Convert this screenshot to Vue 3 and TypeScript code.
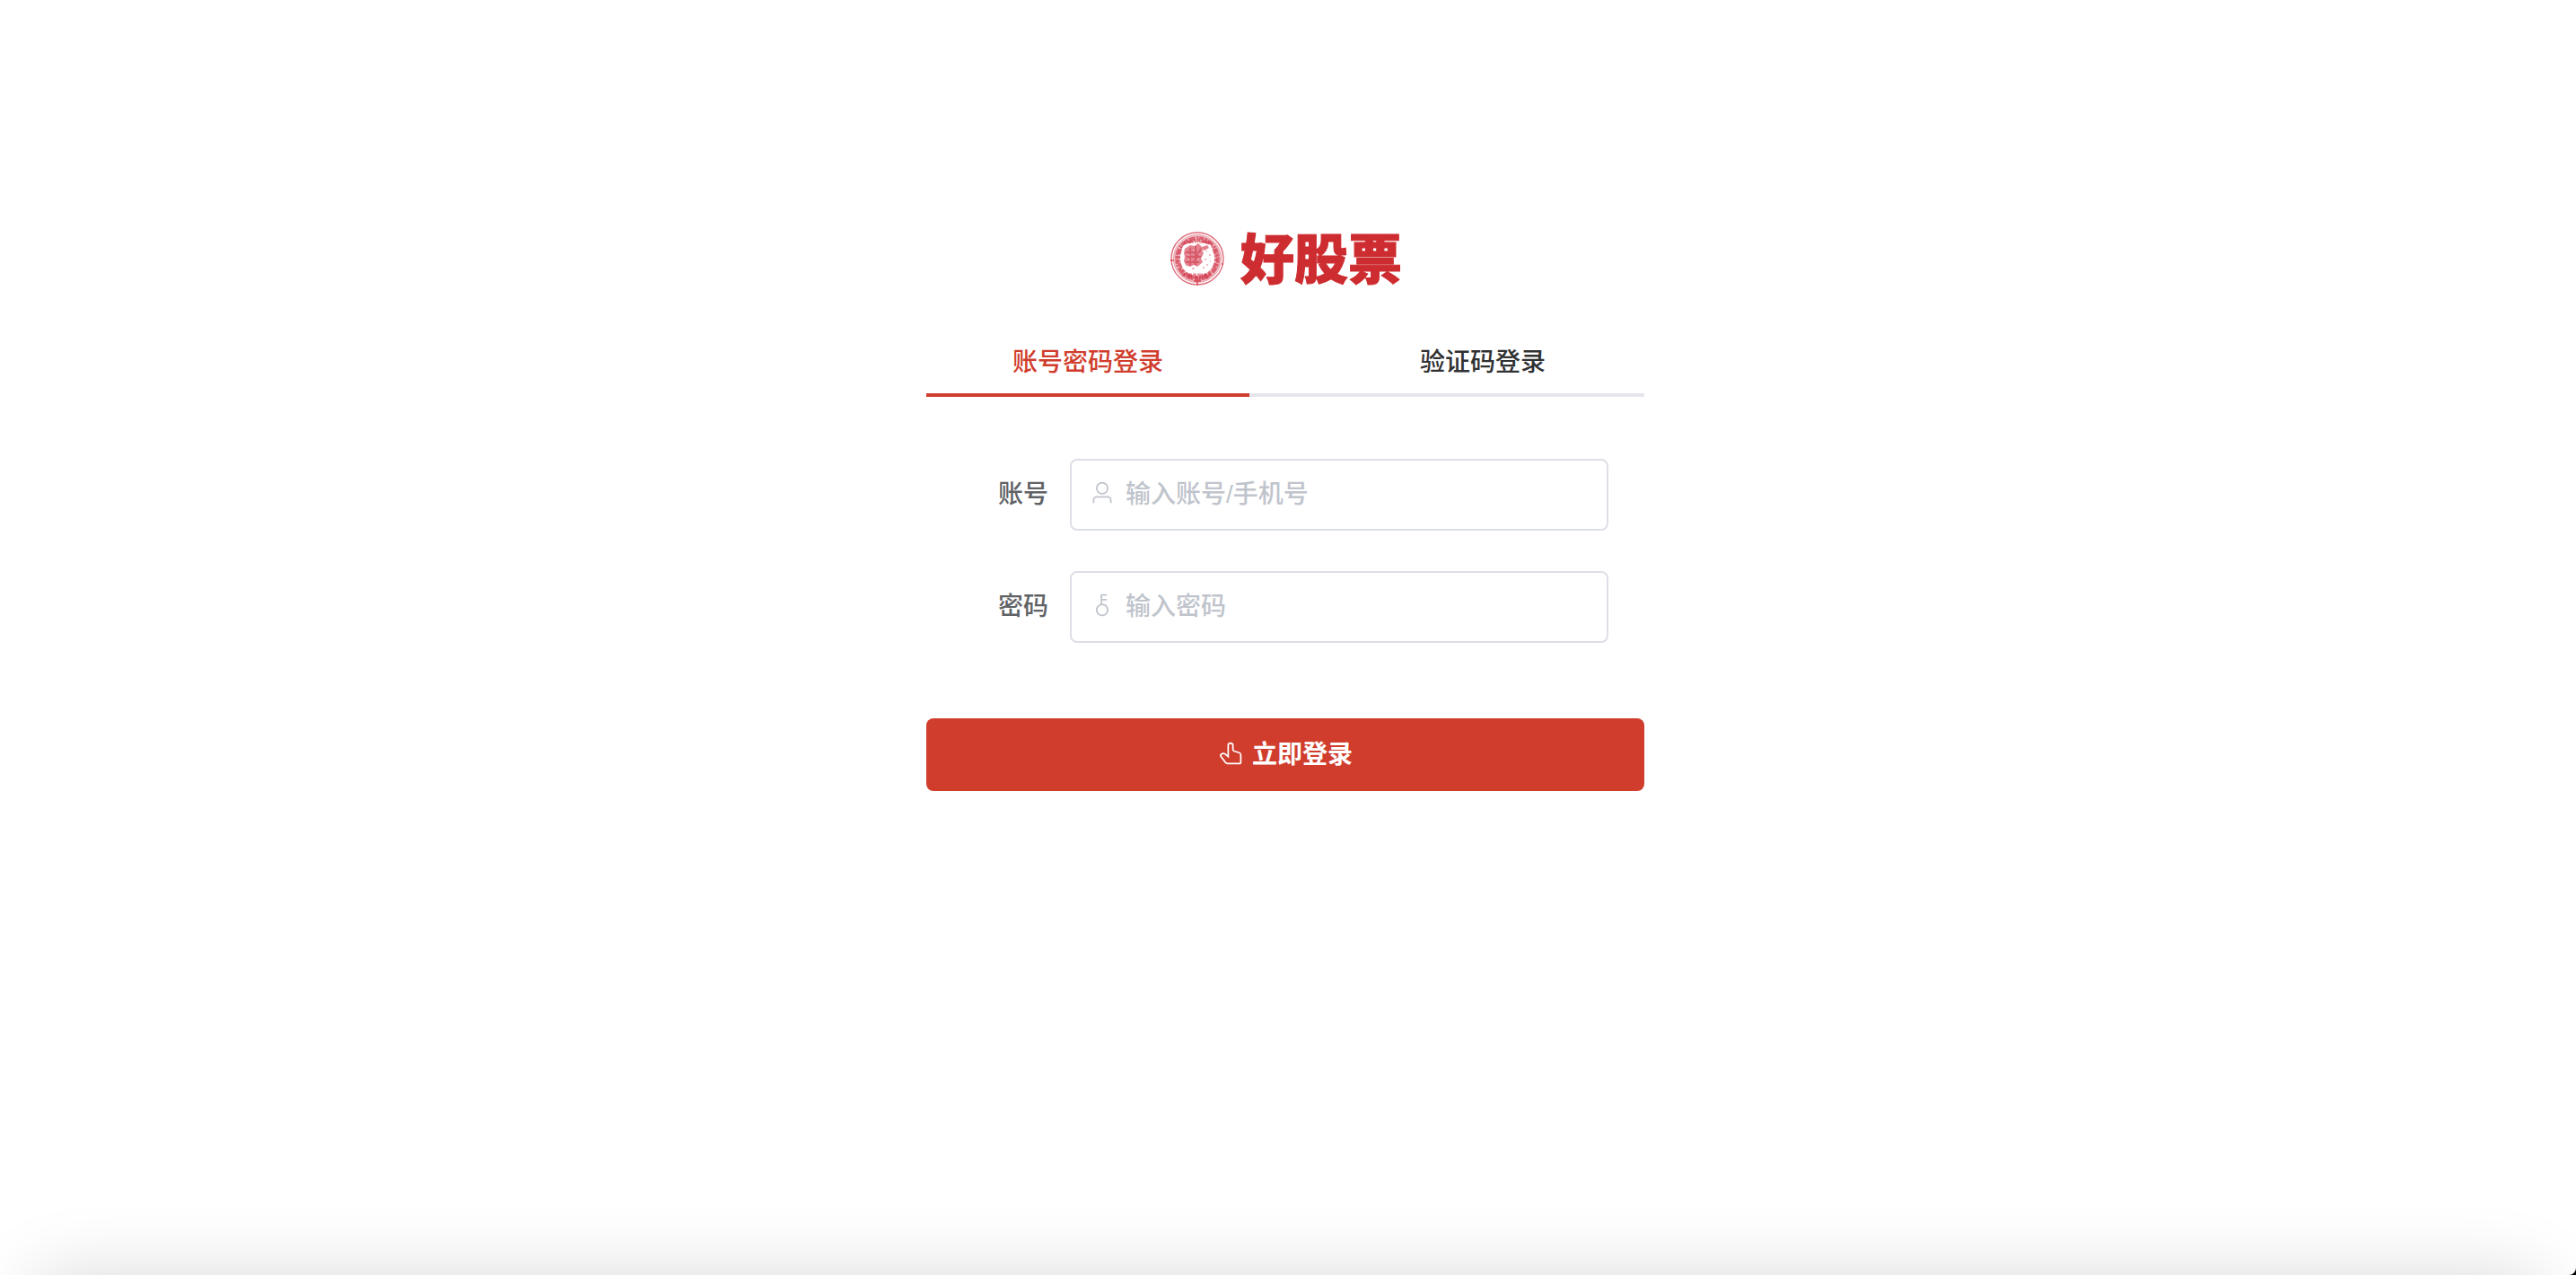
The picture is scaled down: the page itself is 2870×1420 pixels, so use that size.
<script setup lang="ts">
import { ref } from 'vue'

type TabName = 'password' | 'code'

interface TabItem {
  name: TabName
  label: string
}

const tabs: TabItem[] = [
  { name: 'password', label: '账号密码登录' },
  { name: 'code', label: '验证码登录' },
]

const active = ref<TabName>('password')
const account = ref('')
const password = ref('')
</script>

<template>
  <div class="page">
    <main class="login">
      <h1 class="brand">
        <svg class="seal" viewBox="0 0 60 60" fill="none" stroke="#cf3044" aria-hidden="true">
          <circle cx="30" cy="30" r="29" stroke-width="1.4" opacity=".7" />
          <circle cx="30" cy="30" r="26.5" stroke-width="1" opacity=".5" />
          <circle cx="30" cy="30" r="22.5" stroke-width="6.5" opacity=".4" />
          <circle cx="30" cy="30" r="23" stroke-width="3.5" stroke-dasharray="5 1 3 1 7 2 2 1" opacity=".6" />
          <circle cx="30" cy="30" r="20.5" stroke-width="3" stroke-dasharray="3 2 6 1 2 2" opacity=".55" />
          <path d="M15 12h30M13 48h32M20 51h22" stroke-width="3" stroke-dasharray="4 1 6 1" opacity=".5" />
          <path
            d="M17 14 Q31 10 45 15 Q49 24 47 38 Q44 47 32 45 Q18 47 14 41 Q10 28 13 19 Q14 15 17 14Z"
            fill="#fff"
            stroke="none"
          />
          <path
            d="M16 19l6-4 5 1 4-3 4 4 6-2 2 3-5 3-3-1 2 4-3 6 2 4-6 5-4-2-4 2-5-2-2-4 1-5-1-4z"
            fill="#cf3044"
            stroke="none"
            opacity=".6"
          />
          <path d="M17 23h13M18 28h16M17 34h15M22 18v20M28 16v21M34 19l-8 16" stroke-width="2" opacity=".5" />
          <path d="M20 26h2M25 21h2M31 25h2M20 31h2M30 31h2" stroke="#fff" stroke-width="1" opacity=".5" />
          <path d="M40 22h1M43 26h2M38 31h2M44 33h1M40 37h2M36 40h2M24 41h3M18 38h1" stroke-width="1.5" opacity=".45" />
          <path d="M0 32h4M30 55v5M26 55h8M57 36h2" stroke-width="1.5" opacity=".8" />
        </svg>
        <span class="brand-name">好股票</span>
      </h1>

      <div class="tabs" role="tablist">
        <button
          v-for="tab in tabs"
          :key="tab.name"
          type="button"
          role="tab"
          class="tab"
          :class="{ active: active === tab.name }"
          :aria-selected="active === tab.name"
          @click="active = tab.name"
        >
          {{ tab.label }}
        </button>
      </div>

      <form @submit.prevent>
        <div class="fields">
          <div class="field">
            <label for="account">账号</label>
            <div class="control">
              <svg class="icon" viewBox="0 0 1024 1024" fill="currentColor" aria-hidden="true">
                <path
                  d="M512 512a192 192 0 1 0 0-384 192 192 0 0 0 0 384m0 64a256 256 0 1 1 0-512 256 256 0 0 1 0 512m320 320v-96a96 96 0 0 0-96-96H288a96 96 0 0 0-96 96v96a32 32 0 1 1-64 0v-96a160 160 0 0 1 160-160h448a160 160 0 0 1 160 160v96a32 32 0 1 1-64 0"
                />
              </svg>
              <input id="account" v-model="account" type="text" placeholder="输入账号/手机号" autocomplete="off" />
            </div>
          </div>
          <div class="field">
            <label for="password">密码</label>
            <div class="control">
              <svg class="icon" viewBox="0 0 1024 1024" fill="currentColor" aria-hidden="true">
                <path
                  d="M448 456.064V96a32 32 0 0 1 32-32.064L672 64a32 32 0 0 1 0 64H512v128h160a32 32 0 0 1 0 64H512v128a256 256 0 1 1-64 8.064M512 896a192 192 0 1 0 0-384 192 192 0 0 0 0 384"
                />
              </svg>
              <input id="password" v-model="password" type="password" placeholder="输入密码" autocomplete="off" />
            </div>
          </div>
        </div>

        <button class="submit" type="submit">
          <svg class="icon" viewBox="0 0 1024 1024" fill="currentColor" aria-hidden="true">
            <path
              d="M511.552 128c-35.584 0-64.384 28.8-64.384 64.448v516.48L274.048 570.88a94.272 94.272 0 0 0-112.896-3.456 44.416 44.416 0 0 0-8.96 62.208L332.8 870.4A64 64 0 0 0 384 896h512V575.232a64 64 0 0 0-45.632-61.312l-205.952-61.76A96 96 0 0 1 576 360.192V192.448C576 156.8 547.2 128 511.552 128M359.04 556.8l24.128 19.2V192.448a128.448 128.448 0 1 1 256.832 0v167.744a32 32 0 0 0 22.784 30.656l206.016 61.76A128 128 0 0 1 960 575.232V896a64 64 0 0 1-64 64H384a128 128 0 0 1-102.4-51.2L101.056 668.032A108.416 108.416 0 0 1 128 512.512a158.272 158.272 0 0 1 185.984 8.32z"
            />
          </svg>
          <span class="submit-text">立即登录</span>
        </button>
      </form>
    </main>
    <div class="bottom-shade" aria-hidden="true"></div>
  </div>
</template>

<style>
html {
  background: #000;
}

body {
  margin: 0;
}
</style>

<style scoped>
.page {
  box-sizing: border-box;
  position: relative;
  min-height: 100vh;
  padding: 258px 38px 96px 32px;
  overflow: hidden;
  border-radius: 0 0 8px 0;
  background: #fff;
  color: #303133;
  font-family: "Liberation Sans", "Noto Sans CJK SC", sans-serif;
  font-size: 28px;
  font-weight: 500;
  line-height: 40px;
}

.login {
  max-width: 800px;
  margin: 0 auto;
}

.brand {
  display: flex;
  align-items: flex-start;
  justify-content: center;
  gap: 18px;
  height: 60px;
  margin: 0 0 63px;
  padding-left: 2px;
}

.seal {
  width: 60px;
  height: 60px;
}

.brand-name {
  color: #cd2c30;
  font-family: "Noto Sans CJK SC", sans-serif;
  font-size: 60px;
  font-weight: 900;
  line-height: 54px;
  -webkit-text-stroke: 1px #cd2c30;
}

.tabs {
  display: flex;
  gap: 80px;
  box-shadow: inset 0 -4px #e5e6eb;
}

.tab {
  flex: 1;
  height: 61px;
  padding: 0 0 12px;
  border: 0;
  border-bottom: 4px solid transparent;
  background: none;
  color: #303133;
  font: inherit;
  cursor: pointer;
}

.tab.active {
  border-color: #d03d2d;
  color: #d03d2d;
}

.fields {
  display: flex;
  flex-direction: column;
  gap: 45px;
  padding: 69px 40px 84px;
}

.field {
  display: flex;
  align-items: center;
}

label {
  width: 96px;
  margin-right: 24px;
  color: #606266;
  text-align: right;
}

.control {
  display: flex;
  flex: 1;
  align-items: center;
  gap: 12px;
  box-sizing: border-box;
  height: 80px;
  padding: 0 20px 4px;
  border: 2px solid #dcdfe6;
  border-radius: 8px;
  color: #c0c4cc;
}

.icon {
  flex: none;
  width: 28px;
  height: 28px;
}

input {
  flex: 1;
  min-width: 0;
  height: 40px;
  padding: 4px 0 0;
  border: 0;
  outline: 0;
  background: none;
  color: #606266;
  font: inherit;
}

input::placeholder {
  color: #c0c4cc;
  opacity: 1;
}

.submit {
  display: flex;
  align-items: center;
  justify-content: center;
  gap: 10px;
  width: 100%;
  height: 81px;
  padding: 0 0 4px;
  border: 0;
  border-radius: 8px;
  background: #d03d2d;
  color: #fff;
  font: inherit;
  font-weight: 700;
  cursor: pointer;
}

.submit-text {
  padding-top: 4px;
}

.bottom-shade {
  position: absolute;
  top: 100%;
  right: 40px;
  left: 40px;
  height: 120px;
  box-shadow: 0 0 80px rgba(0, 0, 0, 0.15);
}
</style>
